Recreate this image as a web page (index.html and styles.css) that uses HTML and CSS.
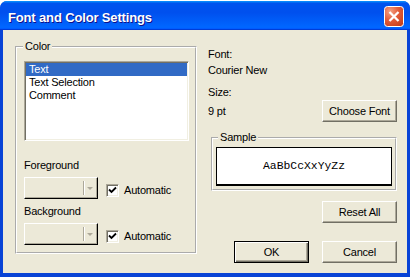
FILE: index.html
```html
<!DOCTYPE html>
<html lang="en">
  <head>
    <meta charset="UTF-8" />
    <title>Font and Color Settings</title>
    <link rel="stylesheet" href="styles.css">
  </head>
  <body>
    <div class="window">
      <div class="titlebar">
        <span class="title">Font and Color Settings</span>
        <button class="close-btn" aria-label="Close">
          <svg width="20" height="21" viewBox="0 0 20 21">
            <defs>
              <radialGradient id="closeGrad" cx="0.3" cy="0.25" r="0.95">
                <stop offset="0" stop-color="#F3A184" />
                <stop offset="0.45" stop-color="#E35D3B" />
                <stop offset="1" stop-color="#C23B17" />
              </radialGradient>
            </defs>
            <rect x="0.5" y="0.5" width="19" height="20" rx="3" fill="url(#closeGrad)" stroke="#fff" />
            <path d="M5.5 6 L14.5 15 M14.5 6 L5.5 15" stroke="#fff" stroke-width="2.3" />
          </svg>
        </button>
      </div>

      <div class="client">
        <fieldset class="group color-group">
          <legend>Color</legend>
          <ul class="listbox">
            <li class="selected">Text</li>
            <li>Text Selection</li>
            <li>Comment</li>
          </ul>

          <div class="field-label first">Foreground</div>
          <div class="color-row">
            <div class="combo"><span class="combo-btn"><span class="arrow"></span></span></div>
            <label class="check">
              <span class="box">
                <svg width="9" height="9" viewBox="0 0 9 9"><path d="M1 3.5 L3.5 6 L8 1.5" fill="none" stroke="#000" stroke-width="1.8" /></svg>
              </span>
              Automatic
            </label>
          </div>

          <div class="field-label">Background</div>
          <div class="color-row">
            <div class="combo"><span class="combo-btn"><span class="arrow"></span></span></div>
            <label class="check">
              <span class="box">
                <svg width="9" height="9" viewBox="0 0 9 9"><path d="M1 3.5 L3.5 6 L8 1.5" fill="none" stroke="#000" stroke-width="1.8" /></svg>
              </span>
              Automatic
            </label>
          </div>
        </fieldset>

        <div class="side">
          <div class="info">Font:</div>
          <div class="info value">Courier New</div>
          <div class="info size-label">Size:</div>
          <div class="size-row">
            <span>9 pt</span>
            <button class="btn">Choose Font</button>
          </div>

          <fieldset class="group sample-group">
            <legend>Sample</legend>
            <div class="sample">AaBbCcXxYyZz</div>
          </fieldset>

          <div class="reset-row">
            <button class="btn">Reset All</button>
          </div>

          <div class="actions">
            <button class="btn default">OK</button>
            <button class="btn">Cancel</button>
          </div>
        </div>
      </div>
    </div>
  </body>
</html>
```

FILE: styles.css
```css
html,
body {
  margin: 0;
  background: #ffffff;
}

body {
  font-family: "Liberation Sans", Arial, sans-serif;
  font-size: 11px;
  line-height: 13px;
  letter-spacing: -0.2px;
  color: #000;
}

.window {
  margin-top: 1px;
  width: 410px;
  height: 276px;
  background: #0843d6;
  border-radius: 7px 7px 0 0;
  display: flex;
  flex-direction: column;
  overflow: hidden;
}

.titlebar {
  flex: none;
  height: 29px;
  display: flex;
  align-items: center;
  justify-content: space-between;
  padding: 0 6px 0 8px;
  background: linear-gradient(
    to bottom,
    #0997ff 0%,
    #0053ee 8%,
    #0050ee 40%,
    #0066ff 88%,
    #0066ff 93%,
    #005bff 95%,
    #003dd7 96%,
    #003dd7 100%
  );
}

.title {
  padding-top: 3px;
  color: #fff;
  font-weight: bold;
  font-size: 13px;
  letter-spacing: -0.15px;
  text-shadow: 1px 1px #0f1089;
}

.close-btn {
  padding: 0;
  margin: 1px 0 0;
  border: none;
  background: none;
  width: 20px;
  height: 21px;
  display: block;
}

.close-btn svg {
  display: block;
}

.client {
  flex: 1;
  margin: 0 3px 4px;
  background: #ece9d8;
  display: flex;
  align-items: flex-start;
  padding: 10px 10px 0 12px;
}

/* group boxes */
.group {
  margin: 0;
  border: 2px groove #ffffff;
  min-width: 0;
}

.group legend {
  padding: 0 2px;
}

.color-group {
  width: 182px;
  box-sizing: border-box;
  padding: 8px 6px 7px 7px;
}

.color-group legend {
  margin-left: -1px;
}

.listbox {
  list-style: none;
  margin: 0;
  padding: 0;
  height: 80px;
  box-sizing: border-box;
  background: #fff;
  border: 1px solid;
  border-color: #aca899 #fff #fff #aca899;
  box-shadow: inset 1px 1px #716f64, inset -1px -1px #f1efe2;
  padding: 1px;
}

.listbox li {
  height: 13px;
  padding-left: 3px;
  white-space: nowrap;
}

.listbox li.selected {
  background: #316ac5;
  color: #fff;
}

.field-label {
  margin-top: 6px;
}

.field-label.first {
  margin-top: 18px;
}

.color-row {
  display: flex;
  align-items: flex-start;
  margin-top: 5px;
}

.combo {
  width: 74px;
  height: 22px;
  box-sizing: border-box;
  border: 1px solid;
  border-color: #fff #000 #000 #fff;
  box-shadow: inset -1px -1px #aca899;
  display: flex;
  justify-content: flex-end;
  padding: 3px 2px 3px 0;
}

.combo-btn {
  width: 11px;
  border-left: 1px solid #aca899;
  box-shadow: inset 1px 0 #fff;
  display: flex;
  align-items: center;
  justify-content: center;
}

.arrow {
  width: 0;
  height: 0;
  border-left: 3px solid transparent;
  border-right: 3px solid transparent;
  border-top: 3px solid #aca899;
  margin-left: 1px;
}

.check {
  display: flex;
  align-items: center;
  margin: 7px 0 0 8px;
}

.box {
  width: 13px;
  height: 13px;
  box-sizing: border-box;
  background: #fff;
  border: 1px solid;
  border-color: #aca899 #fff #fff #aca899;
  box-shadow: inset 1px 1px #716f64, inset -1px -1px #f1efe2;
  display: flex;
  align-items: center;
  justify-content: center;
  margin-right: 5px;
}

.box svg {
  display: block;
}

/* right column */
.side {
  flex: 1;
  margin-left: 11px;
  padding-top: 8px;
}

.info.value {
  margin-top: 3px;
}

.info.size-label {
  margin-top: 9px;
}

.size-row {
  display: flex;
  align-items: center;
  justify-content: space-between;
  margin-top: 1px;
}

.btn {
  width: 75px;
  height: 22px;
  box-sizing: border-box;
  padding: 0;
  font-family: inherit;
  font-size: 11px;
  letter-spacing: -0.2px;
  color: #000;
  background: #ece9d8;
  border: 1px solid;
  border-color: #fff #716f64 #716f64 #fff;
  box-shadow: inset -1px -1px #aca899;
}

.btn.default {
  border-color: #000;
  box-shadow: inset 1px 1px #fff, inset -1px -1px #716f64, inset -2px -2px #aca899;
}

.sample-group {
  margin: 9px 0 0 3px;
  padding: 3px 3px 3px;
}

.sample-group legend {
  margin-left: 2px;
}

.sample {
  height: 39px;
  box-sizing: border-box;
  background: #fff;
  border: 1px solid #000;
  border-bottom-width: 2px;
  display: flex;
  align-items: center;
  justify-content: center;
  font-family: "Liberation Mono", "Courier New", monospace;
  font-size: 11.4px;
  letter-spacing: 0;
}

.reset-row {
  display: flex;
  justify-content: flex-end;
  margin-top: 10px;
}

.actions {
  display: flex;
  justify-content: flex-end;
  gap: 13px;
  margin-top: 18px;
}
```
